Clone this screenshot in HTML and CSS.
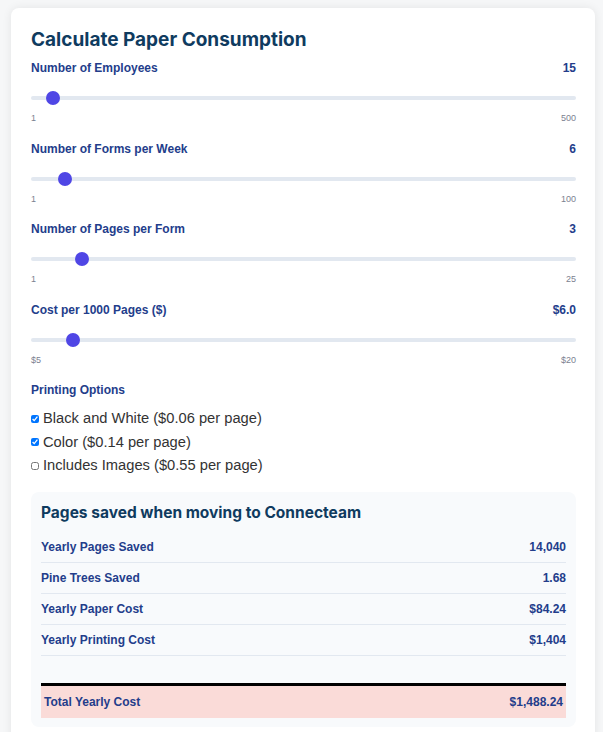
FILE: index.html
```html
<!DOCTYPE html>
<html lang="en">
<head>
    <meta charset="UTF-8">
    <meta name="viewport" content="width=device-width, initial-scale=1.0">
    <title>Paper Consumption Calculator</title>
    <link rel="stylesheet" href="styles.css">
</head>
<body>
    <div class="calculator">
        <h2 class="title">Calculate Paper Consumption</h2>

        <div class="field">
            <div class="field-head">
                <span>Number of Employees</span>
                <span>15</span>
            </div>
            <input type="range" min="1" max="500" value="15">
            <div class="range-labels"><span>1</span><span>500</span></div>
        </div>

        <div class="field">
            <div class="field-head">
                <span>Number of Forms per Week</span>
                <span>6</span>
            </div>
            <input type="range" min="1" max="100" value="6">
            <div class="range-labels"><span>1</span><span>100</span></div>
        </div>

        <div class="field">
            <div class="field-head">
                <span>Number of Pages per Form</span>
                <span>3</span>
            </div>
            <input type="range" min="1" max="25" value="3">
            <div class="range-labels"><span>1</span><span>25</span></div>
        </div>

        <div class="field">
            <div class="field-head">
                <span>Cost per 1000 Pages ($)</span>
                <span>$6.0</span>
            </div>
            <input type="range" min="5" max="20" step="0.5" value="6">
            <div class="range-labels"><span>$5</span><span>$20</span></div>
        </div>

        <div class="options">
            <div class="field-head">Printing Options</div>
            <label class="option"><input type="checkbox" checked> Black and White ($0.06 per page)</label>
            <label class="option"><input type="checkbox" checked> Color ($0.14 per page)</label>
            <label class="option"><input type="checkbox"> Includes Images ($0.55 per page)</label>
        </div>

        <div class="results">
            <h3 class="results-title">Pages saved when moving to Connecteam</h3>
            <table class="results-table">
                <tr><td>Yearly Pages Saved</td><td>14,040</td></tr>
                <tr><td>Pine Trees Saved</td><td>1.68</td></tr>
                <tr><td>Yearly Paper Cost</td><td>$84.24</td></tr>
                <tr><td>Yearly Printing Cost</td><td>$1,404</td></tr>
                <tr class="spacer"><td colspan="2"></td></tr>
                <tr class="total"><td>Total Yearly Cost</td><td>$1,488.24</td></tr>
            </table>
        </div>
    </div>
</body>
</html>
```

FILE: styles.css
```css
body {
    margin: 0;
    background: #f6f7f8;
    font-family: "Liberation Sans", Arial, sans-serif;
}
.calculator {
    background: #fff;
    margin: 8px 8px 0 11px;
    padding: 19px 19px 20px 20px;
    border-radius: 8px;
    box-shadow: 0 0 10px rgba(0, 0, 0, 0.08);
}
.title {
    margin: 0 0 8px;
    font-family: Inter, "Open Sans", sans-serif;
    font-size: 19px;
    font-weight: 700;
    line-height: 26px;
    color: #0f3b5f;
}
.field {
    margin-bottom: 18.5px;
}
.field-head {
    display: flex;
    justify-content: space-between;
    font-size: 12px;
    font-weight: 700;
    line-height: 14px;
    color: #233d8b;
}
input[type="range"] {
    -webkit-appearance: none;
    appearance: none;
    display: block;
    width: 100%;
    height: 14px;
    margin: 16px 0 8px;
    background: transparent;
}
input[type="range"]::-webkit-slider-runnable-track {
    height: 4px;
    background: #e2e8f0;
    border-radius: 2px;
}
input[type="range"]::-webkit-slider-thumb {
    -webkit-appearance: none;
    width: 14px;
    height: 14px;
    margin-top: -5px;
    border-radius: 50%;
    background: #4f46e5;
}
.range-labels {
    display: flex;
    justify-content: space-between;
    font-size: 9px;
    line-height: 10px;
    color: #7b8190;
}
.options .field-head {
    margin-bottom: 10px;
}
.option {
    display: flex;
    align-items: center;
    font-size: 14.7px;
    line-height: 23.5px;
    color: #333;
}
.option input {
    width: 8px;
    height: 8px;
    margin: 0 4px 0 0;
}
.results {
    margin-top: 14px;
    background: #f8fafc;
    border-radius: 8px;
    padding: 10px 10px 9px;
}
.results-title {
    margin: 0 0 8px;
    font-family: Inter, "Open Sans", sans-serif;
    font-size: 15.5px;
    font-weight: 700;
    line-height: 22px;
    color: #0f3b5f;
}
.results-table {
    width: 100%;
    border-collapse: collapse;
    font-size: 12px;
    font-weight: 700;
    color: #233d8b;
}
.results-table td {
    padding: 8px 0;
    line-height: 14px;
    border-bottom: 1px solid #e2e8f0;
}
.results-table td:last-child {
    text-align: right;
}
.results-table .spacer td {
    border: none;
    padding: 0;
    height: 27px;
}
.results-table .total td {
    border-top: 3px solid #000;
    border-bottom: none;
    background: #fadbd8;
    padding: 9px 3px;
}
```
